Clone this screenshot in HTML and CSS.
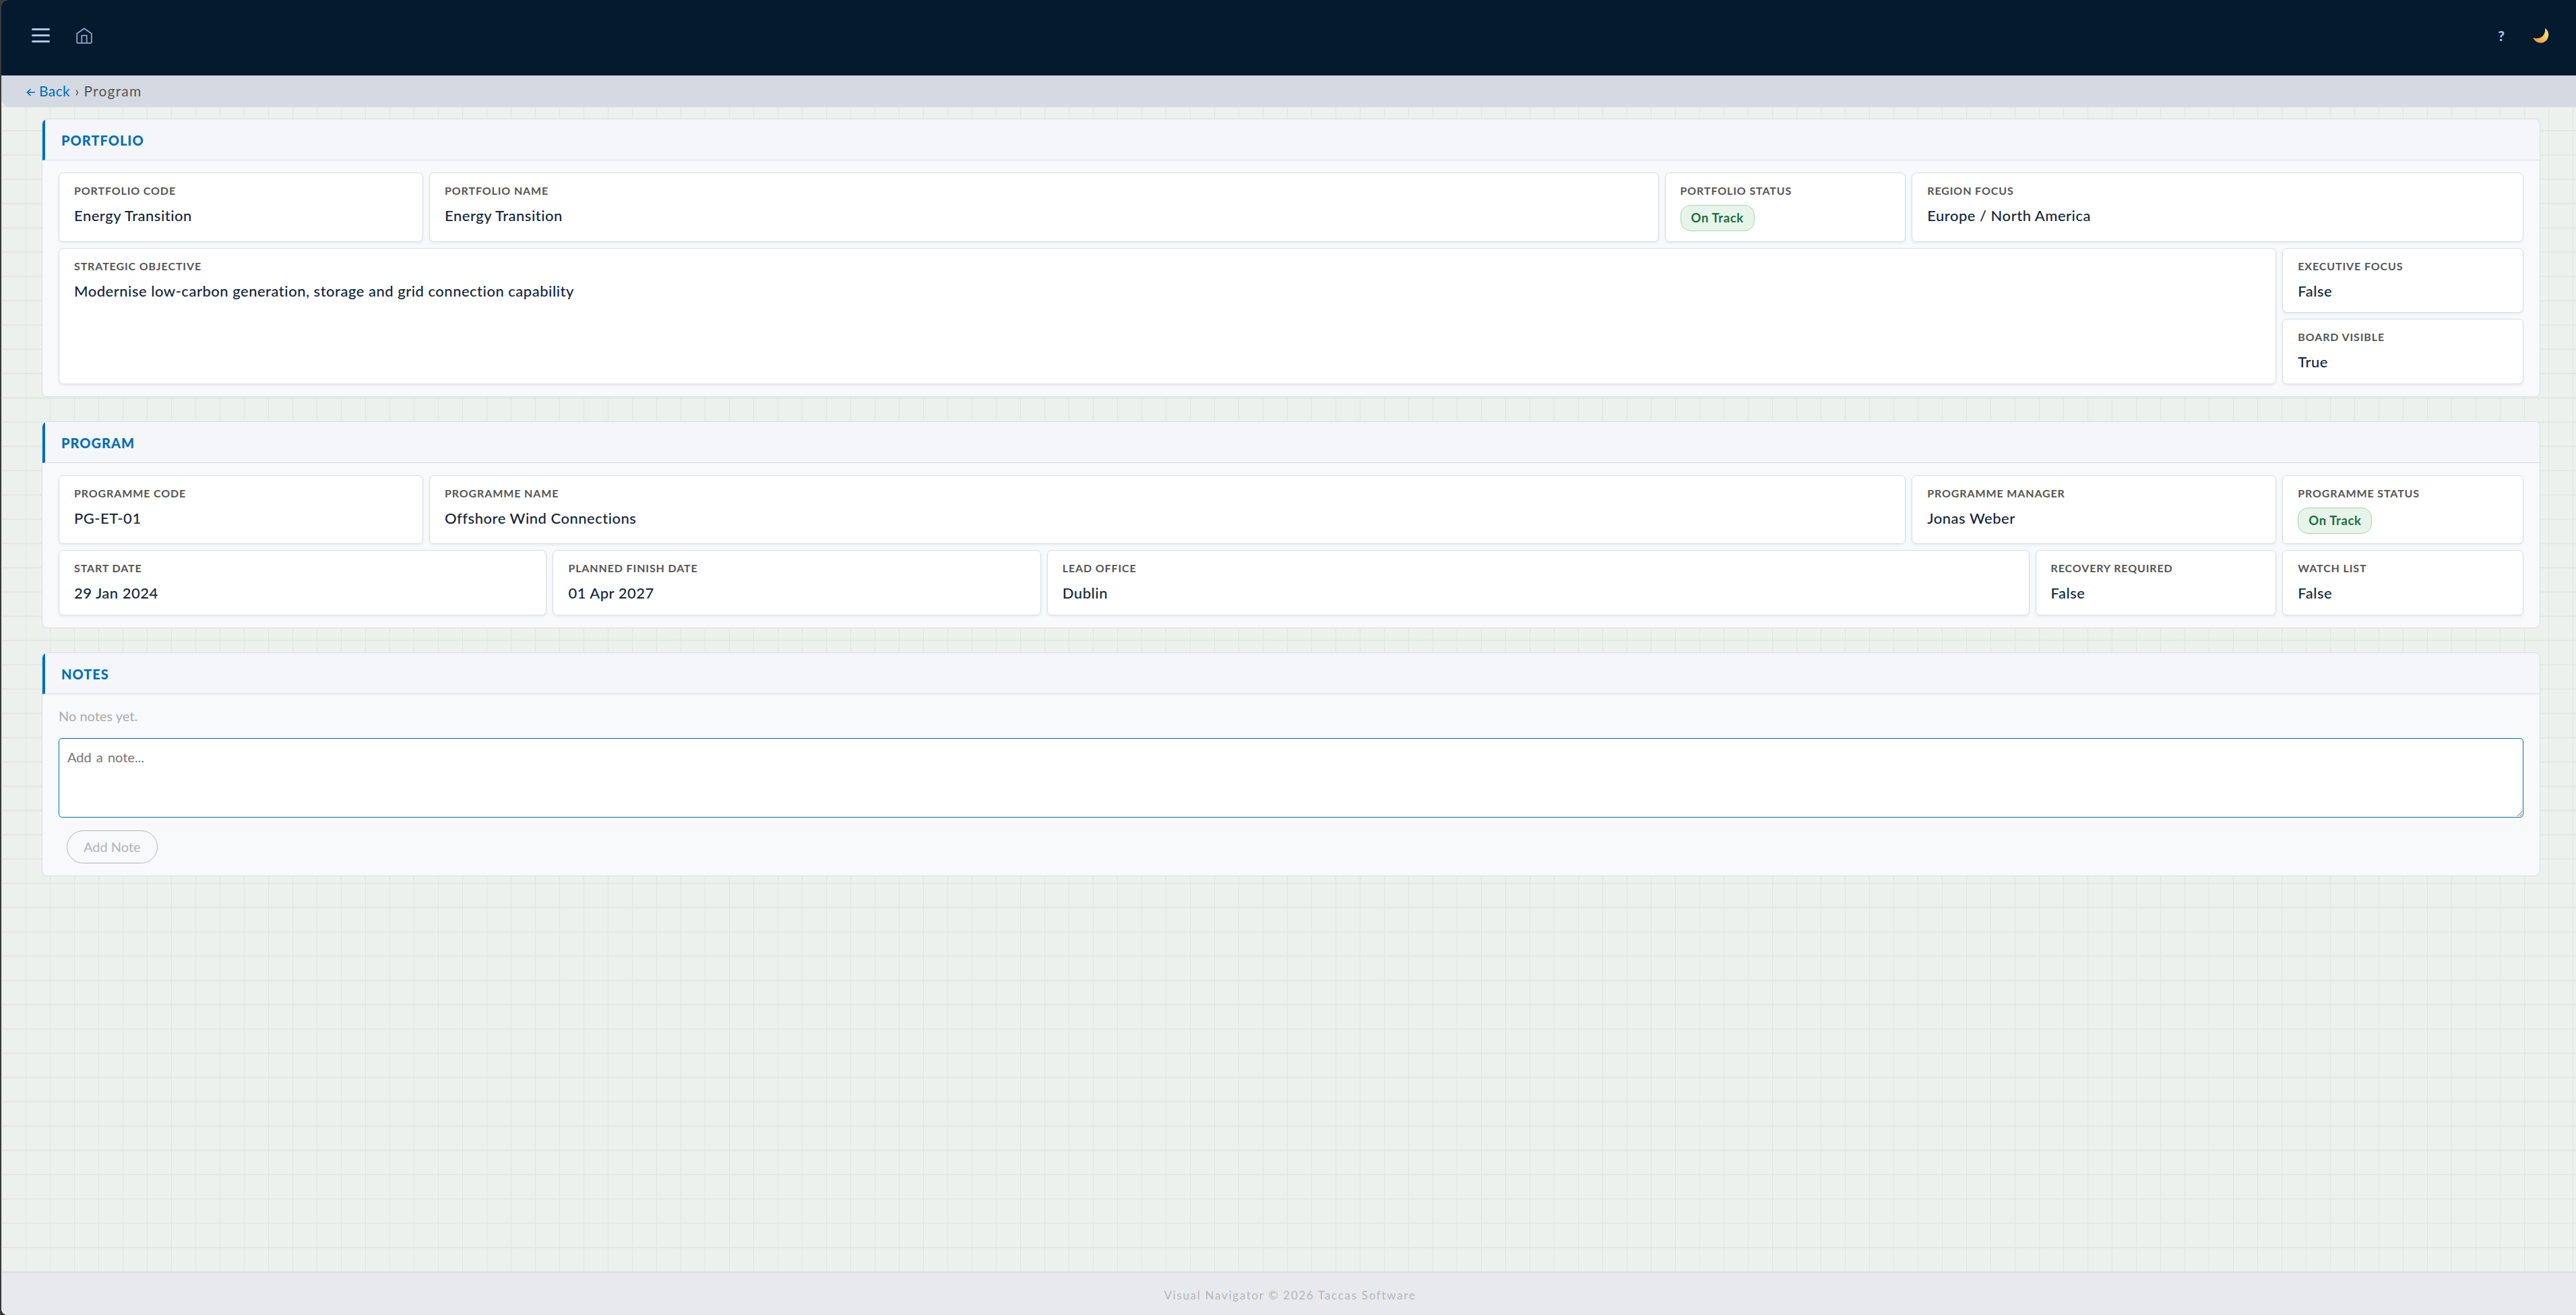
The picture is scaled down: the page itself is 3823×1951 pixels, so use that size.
FILE: index.html
```html
<!DOCTYPE html>
<html lang="en">
<head>
    <meta charset="UTF-8">
    <meta name="viewport" content="width=device-width, initial-scale=1.0">
    <title>Visual Navigator</title>
    <link rel="stylesheet" href="styles.css">
</head>
<body>
    <div class="app">
        <header class="topbar">
            <button class="icon-btn" aria-label="Menu">
                <span class="burger"><span></span><span></span><span></span></span>
            </button>
            <a class="home" href="#" aria-label="Home">
                <svg width="24" height="24" viewBox="0 0 24 24" fill="none" stroke="currentColor" stroke-width="1.8" stroke-linejoin="round">
                    <path d="M1.2 8.800 12 1.200l10.800 7.600v13a1 1 0 0 1-1 1H2.200a1 1 0 0 1-1-1z"/>
                    <path d="M8.300 22.800V11.600h7.400v11.200"/>
                </svg>
            </a>
            <span class="spacer"></span>
            <button class="help">?</button>
            <button class="theme" aria-label="Dark mode">
                <svg width="24" height="24" viewBox="0 0 24 24">
                    <defs>
                        <linearGradient id="moon" x1="0" y1="1" x2="1" y2="0">
                            <stop offset="0" stop-color="#f28a3c"/>
                            <stop offset="0.5" stop-color="#ffc05c"/>
                            <stop offset="1" stop-color="#ffe48a"/>
                        </linearGradient>
                    </defs>
                    <path fill="url(#moon)" d="M18 1c4 2.500 6 7 5 12-1.500 7-8 10.800-14 9.200C5 21.200 1.500 18.500.500 15c5 2 11 1 14.500-3 2.800-3.200 3.700-7 3-11z"/>
                </svg>
            </button>
        </header>

        <nav class="breadcrumb">
            <a href="#"><svg class="arrow" width="13" height="12" viewBox="0 0 13 12" fill="none" stroke="currentColor" stroke-width="1.700"><path d="M13 6H1.500M6.500 1 1.500 6l5 5"/></svg>Back</a>
            <span class="sep">›</span>
            <span class="current">Program</span>
        </nav>

        <main class="content">
            <section class="panel">
                <h2>Portfolio</h2>
                <div class="fields portfolio">
                    <div class="field w3"><label>Portfolio Code</label><p>Energy Transition</p></div>
                    <div class="field w10"><label>Portfolio Name</label><p>Energy Transition</p></div>
                    <div class="field w2"><label>Portfolio Status</label><span class="badge">On Track</span></div>
                    <div class="field w5"><label>Region Focus</label><p>Europe / North America</p></div>
                    <div class="field w18 tall"><label>Strategic Objective</label><p>Modernise low-carbon generation, storage and grid connection capability</p></div>
                    <div class="field w2"><label>Executive Focus</label><p>False</p></div>
                    <div class="field w2"><label>Board Visible</label><p>True</p></div>
                </div>
            </section>

            <section class="panel">
                <h2>Program</h2>
                <div class="fields program">
                    <div class="field w3"><label>Programme Code</label><p>PG-ET-01</p></div>
                    <div class="field w12"><label>Programme Name</label><p>Offshore Wind Connections</p></div>
                    <div class="field w3"><label>Programme Manager</label><p>Jonas Weber</p></div>
                    <div class="field w2"><label>Programme Status</label><span class="badge">On Track</span></div>
                    <div class="field w4"><label>Start Date</label><p>29 Jan 2024</p></div>
                    <div class="field w4"><label>Planned Finish Date</label><p>01 Apr 2027</p></div>
                    <div class="field w8"><label>Lead Office</label><p>Dublin</p></div>
                    <div class="field w2"><label>Recovery Required</label><p>False</p></div>
                    <div class="field w2"><label>Watch List</label><p>False</p></div>
                </div>
            </section>

            <section class="panel">
                <h2>Notes</h2>
                <div class="notes">
                    <p class="empty">No notes yet.</p>
                    <textarea placeholder="Add a note..."></textarea>
                    <button class="add-note" disabled>Add Note</button>
                </div>
            </section>
        </main>

        <footer class="footer">Visual Navigator © 2026 Taccas Software</footer>
    </div>
</body>
</html>
```
FILE: styles.css
```css
* {
    box-sizing: border-box;
}
body {
    margin: 0;
    background: #3a3a3a;
    font-family: Lato, "Open Sans", sans-serif;
    color: #1a2b3c;
}
.app {
    display: flex;
    flex-direction: column;
    height: 1951px;
    margin-left: 2px;
    border-radius: 9px 0 0 9px;
    overflow: hidden;
    background-color: #ecf1ed;
    background-image:
        linear-gradient(to right, #e0e5e2 1.5px, transparent 1.5px),
        linear-gradient(to bottom, #e2e7e4 1.5px, transparent 1.5px);
    background-size: 36.01px 36.02px;
    background-position: 0 13px;
}
button {
    border: none;
    background: none;
    padding: 0;
    font-family: inherit;
}

/* top bar */
.topbar {
    display: flex;
    align-items: center;
    height: 112px;
    padding: 0 40px 6px 45px;
    background: #041a2e;
    border-bottom: 1px solid #0a2744;
}
.burger {
    display: flex;
    flex-direction: column;
    gap: 6px;
    width: 27px;
}
.burger span {
    height: 3px;
    border-radius: 2px;
    background: #a8c7e8;
}
.home {
    display: flex;
    margin-left: 39px;
    color: #8aa9c9;
}
.spacer {
    flex: 1;
}
.help {
    margin-right: 42px;
    font-size: 21px;
    font-weight: 900;
    color: #a8c7e8;
}
.theme {
    display: flex;
}

/* breadcrumb */
.breadcrumb {
    display: flex;
    align-items: center;
    height: 46px;
    padding: 0 0 1px 37px;
    border-radius: 0 0 0 12px;
    background: #d5d9e2;
    font-size: 21px;
    letter-spacing: 0.4px;
    box-shadow: 0 1px 2px rgba(0, 0, 0, 0.06);
}
.breadcrumb a {
    color: #006db8;
    text-decoration: none;
}
.arrow {
    margin-right: 6px;
}
.sep {
    margin: 0 7px;
    color: #555;
}
.current {
    letter-spacing: 1.2px;
    color: #555;
}

/* panels */
.content {
    flex: 1;
    padding: 18px 53px 0 60px;
}
.panel {
    margin-bottom: 36px;
    border: 1px solid #d7dde5;
    border-radius: 8px;
    background: #f8f9fb;
    overflow: hidden;
}
.panel h2 {
    height: 61px;
    margin: 0;
    padding-left: 24px;
    border-left: 4px solid #006db8;
    border-bottom: 1px solid #d7dde5;
    background: #f4f6fa;
    font-size: 20px;
    font-weight: 900;
    line-height: 63px;
    letter-spacing: 1px;
    text-transform: uppercase;
    color: #006db8;
}
.fields {
    display: grid;
    grid-template-columns: repeat(20, 1fr);
    gap: 9px;
    padding: 18px 24px;
}
.portfolio {
    grid-template-rows: 103px 96px 97px;
}
.program {
    grid-template-rows: 102px 97px;
}
.field {
    padding: 17px 22px 0;
    border: 1px solid #d7dde5;
    border-radius: 7px;
    background: #fff;
    box-shadow: 0 2px 4px rgba(0, 0, 0, 0.06);
}
.w2 { grid-column: span 2; }
.w3 { grid-column: span 3; }
.w4 { grid-column: span 4; }
.w5 { grid-column: span 5; }
.w8 { grid-column: span 8; }
.w10 { grid-column: span 10; }
.w12 { grid-column: span 12; }
.w18 { grid-column: span 18; }
.tall { grid-row: span 2; }
.field label {
    display: block;
    font-size: 16px;
    font-weight: 700;
    line-height: 18px;
    letter-spacing: 0.87px;
    text-transform: uppercase;
    color: #555;
}
.field p {
    margin: 14px 0 0;
    font-size: 22px;
    font-weight: 500;
    line-height: 28px;
    letter-spacing: 0.5px;
    color: #12253a;
}
.badge {
    display: inline-block;
    height: 39px;
    margin-top: 12px;
    padding: 0 15px;
    border: 1px solid #a8d5b5;
    border-radius: 15px;
    background: #e6f4ea;
    font-size: 18.5px;
    font-weight: 700;
    line-height: 37px;
    letter-spacing: 0.6px;
    color: #1e6e3c;
}

/* notes */
.notes {
    padding: 18px 24px;
}
.empty {
    margin: 0;
    font-size: 20px;
    line-height: 29px;
    color: #aaa;
}
textarea {
    display: block;
    width: 100%;
    height: 118px;
    margin-top: 18px;
    padding: 15px 12px;
    border: 1px solid #006db8;
    border-radius: 5px;
    background: #fff;
    font-family: Lato, "Open Sans", sans-serif;
    font-size: 20px;
    word-spacing: 2px;
    resize: vertical;
}
textarea::placeholder {
    color: #757575;
}
.add-note {
    height: 49px;
    margin: 19px 0 0 12px;
    padding: 0 24px 2px;
    border: 1px solid #b0b3b8;
    border-radius: 25px;
    font-size: 20px;
    color: #b0b3b8;
}

.footer {
    height: 64px;
    padding-left: 4px;
    border-top: 1px solid #d3d7dc;
    background: #e8e9ed;
    font-size: 17px;
    line-height: 68px;
    letter-spacing: 1.7px;
    text-align: center;
    color: #b5b6b9;
}
```
